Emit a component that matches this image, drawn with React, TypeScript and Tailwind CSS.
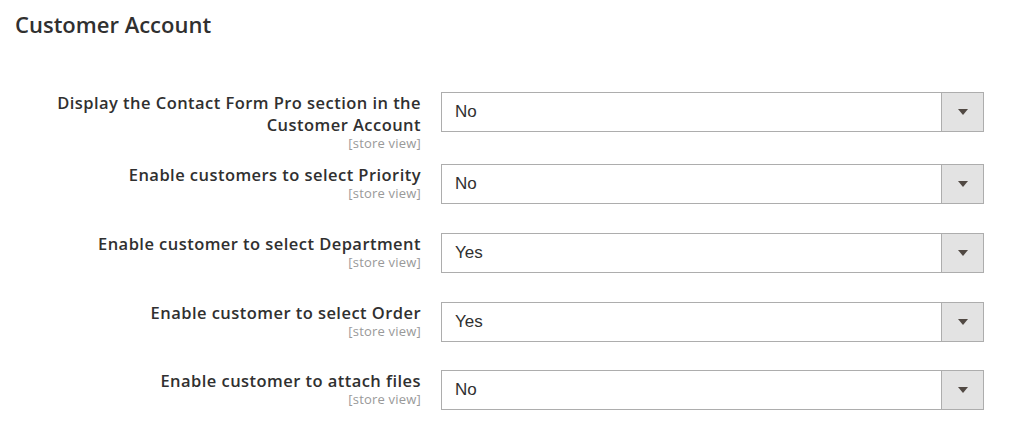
const rows = [
  { label: ['Display the Contact Form Pro section in the', 'Customer Account'], value: 'No', pb: 'pb-[14px]' },
  { label: ['Enable customers to select Priority'], value: 'No', pb: 'pb-[29px]' },
  { label: ['Enable customer to select Department'], value: 'Yes', pb: 'pb-[29px]' },
  { label: ['Enable customer to select Order'], value: 'Yes', pb: 'pb-[28px]' },
  { label: ['Enable customer to attach files'], value: 'No', pb: 'pb-[17px]' },
];

function SelectBox({ value }: { value: string }) {
  return (
    <div className="flex h-10 w-[543px] border border-[#adadad] bg-white">
      <div className="flex flex-1 items-center pl-[13px] text-[17px] text-[#303030] [font-family:'Liberation_Sans',Arial,sans-serif]">
        {value}
      </div>
      <div className="flex w-[42px] items-center justify-center border-l border-[#adadad] bg-[#e3e3e3]">
        <svg width="10" height="6" viewBox="0 0 10 6">
          <path d="M0 0h10L5 6z" fill="#514943" />
        </svg>
      </div>
    </div>
  );
}

export default function App() {
  return (
    <div className="min-h-screen bg-white text-[#303030] [font-family:'Open_Sans',sans-serif]">
      <h2 className="px-[15px] pt-[10px] text-[22px] font-semibold leading-[28px] text-[#303030]">
        Customer Account
      </h2>
      <div className="pt-[54px]">
        {rows.map((row, i) => (
          <div key={i} className={`flex items-start ${row.pb}`}>
            <div className="w-[421px] text-right">
              {row.label.map((line, j) => (
                <div key={j} className="text-[16.5px] font-semibold leading-[22px] tracking-[0.45px]">
                  {line}
                </div>
              ))}
              <div className="text-[13px] leading-[14px] tracking-[0.2px] text-[#999999]">[store view]</div>
            </div>
            <div className="ml-[20px]">
              <SelectBox value={row.value} />
            </div>
          </div>
        ))}
      </div>
    </div>
  );
}
